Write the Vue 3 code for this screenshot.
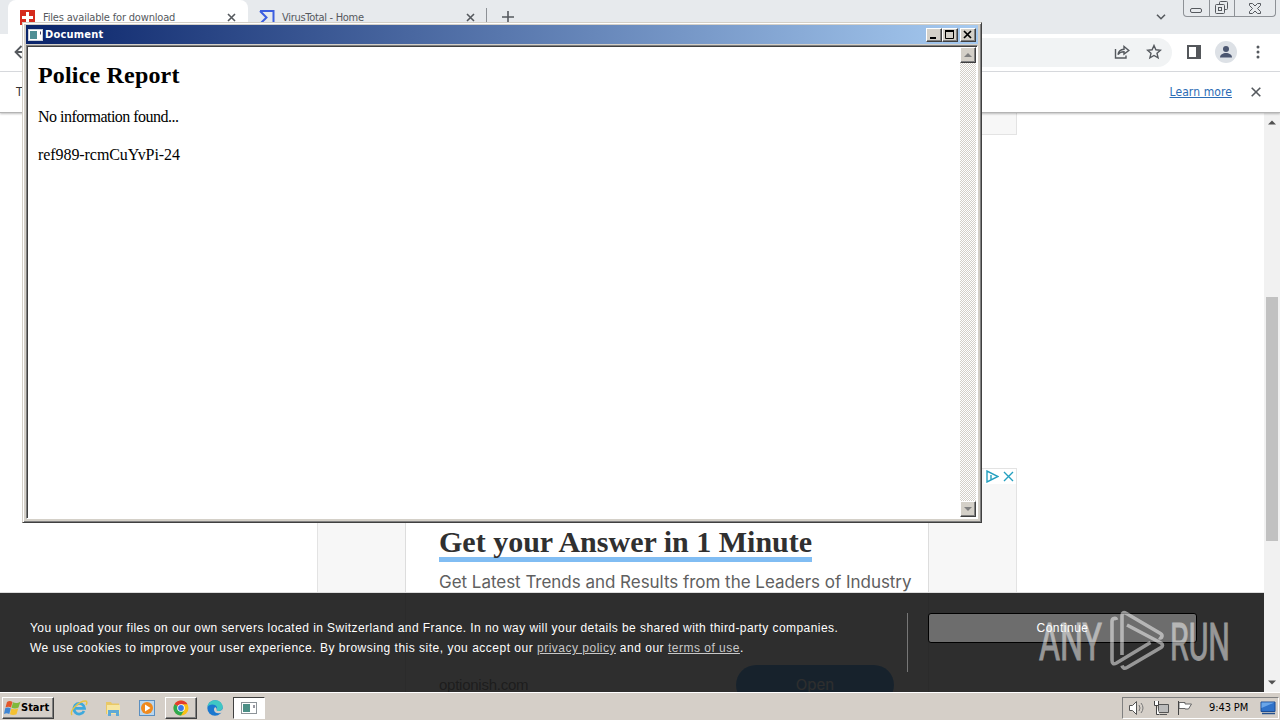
<template>
  <div class="desktop">
    <div class="browser">
      <div class="tabstrip">
        <div class="tab active">
          <svg class="favicon" width="15" height="15" viewBox="0 0 15 15">
            <rect width="15" height="15" fill="#d52b1e" />
            <path d="M6 2h3v4h4v3H9v4H6V9H2V6h4z" fill="#fff" />
          </svg>
          <span class="tab-title files">Files available for download</span>
          <svg class="tab-close" width="9" height="9" viewBox="0 0 9 9"><path d="M1 1l7 7M8 1L1 8" /></svg>
        </div>
        <div class="tab second">
          <svg class="favicon" width="16" height="15" viewBox="0 0 16 15">
            <path d="M1 1h13.5v13H1l6.5-6.500L1 1" fill="none" stroke="#3d5fe0" stroke-width="2" />
          </svg>
          <span class="tab-title vt">VirusTotal - Home</span>
          <svg class="tab-close" width="9" height="9" viewBox="0 0 9 9"><path d="M1 1l7 7M8 1L1 8" /></svg>
        </div>
        <span class="tab-sep"></span>
        <svg class="new-tab" width="12" height="12" viewBox="0 0 12 12"><path d="M6 0v12M0 6h12" /></svg>
        <svg class="tab-search" width="10" height="6" viewBox="0 0 10 6"><path d="M1 .7l4 4 4-4" /></svg>
        <div class="caption-buttons">
          <span class="cap cap-min">
            <svg width="13" height="5" viewBox="0 0 13 5"><rect x=".5" y=".5" width="11" height="4" rx="1.500" /></svg>
          </span>
          <span class="cap cap-max">
            <svg width="14" height="14" viewBox="0 0 14 14">
              <rect x="4.500" y=".5" width="8" height="8" rx="1" />
              <rect x=".5" y="3.500" width="9" height="9" rx="1" fill="#e7eaed" />
              <rect x="3.500" y="6.500" width="3" height="3" />
            </svg>
          </span>
          <span class="cap cap-close">
            <svg width="12" height="11" viewBox="0 0 12 11">
              <path d="M.5.5h3L6 3 8.500.5h3v2L8.500 5.500l3 3v2h-3L6 8l-2.500 2.500h-3v-2l3-3-3-3z" />
            </svg>
          </span>
        </div>
      </div>

      <div class="toolbar">
        <svg class="back" width="14" height="14" viewBox="0 0 14 14"><path d="M14 7H2M7.500 1L1.500 7l6 6" /></svg>
        <div class="omnibox">
          <svg width="16" height="14" viewBox="0 0 16 14">
            <path d="M1.500 4v9h10.500v-2.500" /><path d="M4 9.500C4.500 6 7 4.500 10 4.300V1.500L14.800 5.500 10 9V6.800C7.500 6.800 5.500 7.500 4 9.500z" />
          </svg>
          <svg width="16" height="16" viewBox="0 0 16 16">
            <path d="M8 1.500l1.900 4.300 4.600.4-3.500 3.100 1.100 4.600L8 11.500l-4.100 2.400L5 9.300 1.500 6.200l4.600-.4z" />
          </svg>
        </div>
        <svg class="sidepanel" width="14" height="14" viewBox="0 0 14 14">
          <rect x="1" y="1" width="12" height="12" fill="none" stroke="#54575b" stroke-width="2" />
          <rect x="9" y="1" width="4" height="12" fill="#54575b" />
        </svg>
        <span class="avatar">
          <svg width="14" height="14" viewBox="0 0 14 14">
            <circle cx="7" cy="4" r="3" /><path d="M1 12.500c0-6 12-6 12 0z" />
          </svg>
        </span>
        <svg class="kebab" width="4" height="14" viewBox="0 0 4 14">
          <circle cx="2" cy="2" r="1.500" /><circle cx="2" cy="7" r="1.500" /><circle cx="2" cy="12" r="1.500" />
        </svg>
      </div>

      <div class="infobar">
        <span class="info-text">T</span>
        <a class="learn">Learn more</a>
        <svg class="info-close" width="10" height="10" viewBox="0 0 10 10"><path d="M.7.7l8.600 8.600M9.300.7L.7 9.300" /></svg>
      </div>

      <div class="viewport">
        <div class="page">
          <div class="ad-top"></div>
          <div class="ad">
            <div class="ad-choices">
              <svg width="13" height="13" viewBox="0 0 13 13"><path d="M1 1v11l11-5.500zM5 5v4.500" /></svg>
              <svg width="11" height="11" viewBox="0 0 11 11"><path d="M1 1l9 9M10 1L1 10" /></svg>
            </div>
            <div class="ad-card">
              <div class="ad-title">Get your Answer in 1 Minute</div>
              <div class="ad-sub">Get Latest Trends and Results from the Leaders of Industry</div>
              <div class="ad-foot">
                <span class="ad-domain">optionish.com</span>
                <span class="ad-open">Open</span>
              </div>
            </div>
          </div>
          <div class="cookie">
            <div class="cookie-text">
              <p class="c1">You upload your files on our own servers located in Switzerland and France. In no way will your details be shared with third-party companies.</p>
              <p class="c2">We use cookies to improve your user experience. By browsing this site, you accept our <a>privacy policy</a> and our <a>terms of use</a>.</p>
            </div>
            <span class="cookie-rule"></span>
            <button class="continue">Continue</button>
          </div>
        </div>
        <div class="scrollbar">
          <svg width="8" height="5" viewBox="0 0 8 5"><path d="M0 4.500L4 .5l4 4z" /></svg>
          <span class="thumb"></span>
          <svg width="8" height="5" viewBox="0 0 8 5"><path d="M0 .5l4 4 4-4z" /></svg>
        </div>
      </div>
    </div>

    <div class="taskbar">
      <div class="start">
        <svg width="17" height="16" viewBox="0 0 17 16">
          <path d="M3 2c2-1.500 4-1 5.500 0L7 7.500C5.500 6.500 3.500 6.300 1.500 7.500z" fill="#e2572b" />
          <path d="M9 2.300c2 1.200 5 1.200 7.500-.8L14.500 7.500c-2 1.300-5 1.200-7 .2z" fill="#7fb93c" />
          <path d="M1.200 8.200c2-1.200 4-.8 5.600.2L5.300 14C3.500 13 2 12.800 0 14z" fill="#3f86d4" />
          <path d="M7.300 8.500c2 1 5 1 7-.3L12.500 14.200c-2 1-4.500 1-6.500 0z" fill="#f5c131" />
        </svg>
        <span>Start</span>
      </div>
      <div class="quick">
        <span class="task">
          <svg width="18" height="18" viewBox="0 0 18 18">
            <path d="M14 12A5.300 5.300 0 1 1 14.500 9.300H5" fill="none" stroke="#3fa9dc" stroke-width="2.800" />
            <path d="M2 16C-1 12 9 2 15.500 2c2 0 1.500 2.500.5 4" fill="none" stroke="#e8c440" stroke-width="1.400" />
          </svg>
        </span>
        <span class="task">
          <svg width="18" height="18" viewBox="0 0 18 18">
            <path d="M2 3h5l1 1.500h7V15H2z" fill="#e9c866" />
            <path d="M3 6h13v9H3z" fill="#f7e6a0" />
            <path d="M4 17v-6h11v6h-3v-3H7v3z" fill="#5fa9d6" />
          </svg>
        </span>
        <span class="task">
          <svg width="16" height="16" viewBox="0 0 16 16">
            <rect x=".5" y=".5" width="15" height="15" fill="#b9d6ee" stroke="#5b8fc0" />
            <circle cx="8" cy="8" r="6" fill="#f08a1d" /><path d="M6 4.500v7L11.500 8z" fill="#fff" />
          </svg>
        </span>
        <span class="task raised">
          <svg width="16" height="16" viewBox="0 0 16 16">
            <circle cx="8" cy="8" r="7.500" fill="#fbc116" />
            <path d="M8 8L1.500 4.250A7.500 7.500 0 0 1 14.500 4.250H8z" fill="#e33b2e" />
            <path d="M8 8L1.500 4.250A7.500 7.500 0 0 0 8 15.500L11.250 9.900z" fill="#2da94f" />
            <circle cx="8" cy="8" r="3.800" fill="#fff" /><circle cx="8" cy="8" r="2.900" fill="#3b78e7" />
          </svg>
        </span>
        <span class="task">
          <svg width="16" height="16" viewBox="0 0 16 16">
            <circle cx="8" cy="8" r="7.700" fill="#1b78cf" />
            <path d="M.5 7C1 2.500 4.500.3 8 .3c5 0 7.700 3.500 7.700 6.700 0 2.500-2 4-4 4-1.500 0-2.700-.7-2-1.500C11 7.500 9 4.500 5.500 4.500 3 4.500 1.200 5.500.5 7z" fill="#3fc7c4" />
            <path d="M9.700 9.500c-.7.800.5 1.500 2 1.500 1.800 0 3.300-.8 3.900-2.300l.4 3-2.500 1.300c-4 1-6.500-1-6.500-3.500 0-1 .5-2 1.200-2.300 1 .3 1.700 1.500 1.500 2.300z" fill="#d5cfc8" />
          </svg>
        </span>
        <span class="task pressed">
          <svg width="16" height="12" viewBox="0 0 16 12">
            <rect x=".5" y=".5" width="15" height="11" fill="#fff" stroke="#8d9499" />
            <rect x="2" y="2" width="7" height="8" fill="#4c8f86" /><path d="M13 3v3" stroke="#334" />
          </svg>
        </span>
      </div>
      <div class="tray">
        <svg width="18" height="16" viewBox="0 0 18 16">
          <path d="M1.500 5.500h3l4-4v13l-4-4h-3z" fill="#fff" stroke="#555" />
          <path d="M11 5q2 3 0 6M13 3q4 5 0 10" fill="none" stroke="#777" />
        </svg>
        <svg width="17" height="16" viewBox="0 0 17 16">
          <path d="M5.500 4.500h10v8h-10zM7 14.500h7" fill="#bbb" stroke="#555" />
          <path d="M1.500 1v4.500h4V1M3.500 5.500v9h3" fill="#fff" stroke="#444" />
        </svg>
        <svg width="16" height="16" viewBox="0 0 16 16">
          <path d="M2 2.500h6v1.500h6.500l-3 5H8V8.500H2z" fill="#fff" stroke="#666" /><path d="M1.500 1v14" stroke="#444" />
        </svg>
        <span class="clock">9:43 PM</span>
        <svg class="show-desktop" width="16" height="14" viewBox="0 0 16 14">
          <path d="M1 1h14v9.500H1z" fill="#2f72c9" stroke="#1c4d94" />
          <path d="M1.500 1.500h13L1.500 7z" fill="#69a5e8" /><path d="M2 12.500h13" stroke="#24508c" stroke-width="1.500" />
        </svg>
      </div>
    </div>

    <div class="window">
      <div class="titlebar">
        <svg width="16" height="14" viewBox="0 0 16 14">
          <rect x=".5" y="1.500" width="14" height="11" fill="#fff" stroke="#c9d0d8" />
          <rect x="2" y="3" width="7" height="8" fill="#4f8f95" /><path d="M12.500 3.500v3" stroke="#446" />
        </svg>
        <span class="win-title">Document</span>
        <span class="wbtn"><svg width="12" height="10" viewBox="0 0 12 10"><path d="M2 8h6" stroke="#000" stroke-width="2" /></svg></span>
        <span class="wbtn"><svg width="12" height="10" viewBox="0 0 12 10"><path d="M1.500.5v8h8v-8" fill="none" stroke="#000" /><path d="M1 1h9" stroke="#000" stroke-width="2" /></svg></span>
        <span class="wbtn last"><svg width="12" height="10" viewBox="0 0 12 10"><path d="M2 1l7 7M9 1L2 8" stroke="#000" stroke-width="1.700" /></svg></span>
      </div>
      <div class="win-body">
        <div class="doc">
          <h2>Police Report</h2>
          <p class="d1">No information found...</p>
          <p class="d2">ref989-rcmCuYvPi-24</p>
        </div>
        <div class="win-scroll">
          <span class="sbtn"><svg width="8" height="4" viewBox="0 0 8 4"><path d="M0 4l4-4 4 4z" /></svg></span>
          <span class="sbtn"><svg width="8" height="4" viewBox="0 0 8 4"><path d="M0 0l4 4 4-4z" /></svg></span>
        </div>
      </div>
    </div>

    <svg class="watermark" width="200" height="70" viewBox="1035 605 200 70">
      <text x="1039" y="660" textLength="63" lengthAdjust="spacingAndGlyphs">ANY</text>
      <text x="1170" y="660" textLength="60" lengthAdjust="spacingAndGlyphs">RUN</text>
      <path d="M1116.500 620q-.5-2-2.500-1.500-2 .5-2 3V660q0 5.500 4.500 3l34-20.500" />
      <path d="M1122 655V616q0-5 4.500-2.500l34 20q2.500 1.500 1 4-1 1-2.500 0" />
      <path d="M1127 625l34 18q3 2 0 4.500l-34 20q-4 2-5-2" />
    </svg>
  </div>
</template>

<script setup>
</script>

<style>
html,
body {
  margin: 0;
  overflow: hidden;
}
</style>

<style scoped>
.desktop {
  position: relative;
  display: flex;
  flex-direction: column;
  width: 1280px;
  height: 720px;
  overflow: hidden;
  background: #fff;
  font-family: "Liberation Sans", Arial, sans-serif;
}
.desktop svg { flex: none; display: block; }
.browser { height: 692px; display: flex; flex-direction: column; }

.tabstrip {
  height: 34px;
  flex: none;
  display: flex;
  align-items: flex-start;
  background: #e7eaed;
  padding-left: 8px;
}
.tab {
  display: flex;
  align-items: center;
  width: 240px;
  height: 34px;
  box-sizing: border-box;
  padding: 0 12px;
}
.tab.active { background: #fff; border-radius: 8px 8px 0 0; }
.tab.second { padding: 0 13px 0 11px; }
.tab-title {
  flex: 1;
  margin-left: 8px;
  white-space: nowrap;
  font: 11px "DejaVu Sans Condensed", "DejaVu Sans", sans-serif;
  color: #55595e;
}
.files { letter-spacing: -0.18px; }
.vt { margin-left: 7px; letter-spacing: -0.3px; }
.tab-close path, .new-tab path, .tab-search path, .info-close path {
  fill: none;
  stroke: #55595e;
  stroke-width: 1.6;
}
.tab-sep { width: 1px; height: 14px; margin: 8px 15px 0 -2px; background: #8d9196; }
.new-tab { margin-top: 11px; }
.tab-search { margin: 14px 17px 0 auto; }
.caption-buttons {
  display: flex;
  width: 93px;
  height: 17px;
  margin-right: 4px;
  box-sizing: border-box;
  border: 1px solid #8d9196;
  border-top: 0;
  border-radius: 0 0 4px 4px;
}
.cap { display: flex; align-items: center; justify-content: center; }
.cap svg { fill: none; stroke: #55595e; }
.cap-min { width: 25px; padding-top: 4px; }
.cap-max { width: 24px; border: solid #8d9196; border-width: 0 1px; }
.cap-close { flex: 1; }

.toolbar {
  height: 37px;
  flex: none;
  display: flex;
  align-items: center;
  border-bottom: 1px solid #dadce0;
  padding: 0 20px 0 14px;
}
.back { fill: none; stroke: #55595e; stroke-width: 1.8; }
.omnibox {
  flex: 1;
  height: 29px;
  margin-left: 81px;
  padding-right: 10px;
  display: flex;
  align-items: center;
  justify-content: flex-end;
  gap: 16px;
  border-radius: 15px;
  background: #f1f3f4;
}
.omnibox svg { fill: none; stroke: #55595e; stroke-width: 1.4; }
.sidepanel { margin-left: 15px; }
.toolbar > svg, .omnibox svg, .avatar { margin-bottom: 1px; }
.avatar {
  width: 22px;
  height: 22px;
  margin-left: 14px;
  margin-right: 19px;
  display: flex;
  align-items: center;
  justify-content: center;
  border-radius: 50%;
  background: #dde1e6;
  fill: #4b5670;
}
.kebab { fill: #55595e; }

.infobar {
  position: relative;
  height: 41px;
  box-sizing: border-box;
  flex: none;
  display: flex;
  align-items: center;
  padding: 0 19px 0 16px;
  background: #fff;
  border-bottom: 1px solid #b4b4b4;
  box-shadow: 0 1px 2px rgba(0, 0, 0, 0.25);
  font: 12px "DejaVu Sans Condensed", sans-serif;
  color: #333;
}
.learn { margin-left: auto; letter-spacing: 0.1px; color: #2b6cb5; text-decoration: underline; }
.info-close { margin-left: 19px; }

.viewport { flex: 1; display: flex; min-height: 0; }
.page {
  flex: 1;
  display: flex;
  flex-direction: column;
  align-items: flex-start;
  padding-left: 317px;
  overflow: hidden;
}
.ad-top, .ad { width: 700px; box-sizing: border-box; border: 1px solid #e3e3e3; background: #f7f7f7; flex: none; }
.ad-top { height: 22px; border-top: 0; }
.ad { height: 124px; margin-top: 333px; padding: 0 87px; border-bottom: 0; position: relative; }
.ad-choices {
  position: absolute;
  top: 0;
  right: 0;
  display: flex;
  align-items: center;
  gap: 4px;
  height: 15px;
  padding: 0 2px;
  background: #fff;
  fill: none;
  stroke: #24a0c0;
  stroke-width: 1.4;
}
.ad-card {
  height: 223px;
  box-sizing: border-box;
  padding: 54px 0 0 33px;
  background: #fff;
  border: solid #ddd;
  border-width: 0 1px;
}
.ad-title {
  width: 373px;
  height: 39px;
  line-height: 38px;
  white-space: nowrap;
  border-bottom: 5px solid #81bdf3;
  box-sizing: border-box;
  font-family: "Liberation Serif", serif;
  font-weight: bold;
  font-size: 30px;
  color: #303030;
}
.ad-sub {
  margin-top: 10px;
  line-height: 21px;
  white-space: nowrap;
  font-family: Inter, sans-serif;
  font-size: 17px;
  letter-spacing: -0.03px;
  color: #606060;
}
.ad-foot {
  display: flex;
  justify-content: space-between;
  margin-top: 72px;
  padding-right: 34px;
}
.ad-domain { line-height: 40px; color: #555; font-size: 15px; letter-spacing: -0.25px; }
.ad-open {
  width: 158px;
  height: 40px;
  border-radius: 20px;
  background: #1987eb;
  color: #fff;
  text-align: center;
  font: 15px/40px Inter, sans-serif;
}
.cookie {
  position: relative;
  display: flex;
  align-items: flex-start;
  width: 1264px;
  height: 100px;
  margin-left: -317px;
  padding: 20px 0 0 30px;
  box-sizing: border-box;
  border-top: 1px solid #ddd;
  background: rgba(23, 23, 23, 0.9);
  background-clip: padding-box;
  color: #fff;
}
.cookie-text { width: 877px; padding-top: 5px; white-space: nowrap; }
.cookie-text p { margin: 0; font-size: 12px; line-height: 20px; letter-spacing: 0.5px; }
.cookie-text .c1 { letter-spacing: 0.437px; }
.cookie-text a { color: #c8c8c8; text-decoration: underline; }
.cookie-rule { width: 1px; height: 59px; background: #777; }
.continue {
  width: 269px;
  height: 30px;
  margin-left: 20px;
  padding: 0;
  border: 1px solid #000;
  border-radius: 3px;
  background: #6d6d6d;
  color: #fff;
  font: 12px "Liberation Sans", sans-serif;
  letter-spacing: 0.5px;
}
.scrollbar {
  width: 16px;
  display: flex;
  flex-direction: column;
  align-items: center;
  box-sizing: border-box;
  padding: 7px 0;
  background: #f1f1f1;
  fill: #505050;
}
.thumb { width: 12px; height: 244px; margin: 172px 0 auto; background: #c1c1c1; }

.taskbar {
  height: 28px;
  box-sizing: border-box;
  display: flex;
  align-items: center;
  border-top: 1px solid #fff;
  background: #d5cfc8;
  padding: 2px 1px 0 2px;
}
.start {
  width: 52px;
  height: 22px;
  box-sizing: border-box;
  display: flex;
  align-items: center;
  padding-left: 1px;
  border: 1px solid;
  border-color: #fff #404040 #404040 #fff;
  box-shadow: inset -1px -1px #808080;
  font: bold 11px "DejaVu Sans Condensed", sans-serif;
  color: #000;
}
.quick { display: flex; gap: 2px; margin-left: 9px; }
.task {
  width: 32px;
  height: 22px;
  box-sizing: border-box;
  display: flex;
  align-items: center;
  justify-content: center;
}
.raised { border: 1px solid; border-color: #fff #404040 #404040 #fff; box-shadow: inset -1px -1px #808080; }
.pressed { border: 1px solid; border-color: #404040 #fff #fff #404040; background: #fff; }
.tray {
  width: 157px;
  height: 22px;
  box-sizing: border-box;
  margin-left: auto;
  display: flex;
  align-items: center;
  gap: 7px;
  padding-left: 5px;
  border: 1px solid;
  border-color: #808080 #fff #fff #808080;
}
.clock {
  margin-left: 9px;
  width: 44px;
  white-space: nowrap;
  letter-spacing: -0.1px;
  font: 11px "DejaVu Sans Condensed", sans-serif;
  color: #000;
}

/* Floating document window */
.window {
  position: absolute;
  left: 22px;
  top: 22px;
  width: 960px;
  height: 501px;
  box-sizing: border-box;
  display: flex;
  flex-direction: column;
  padding: 2px 3px 3px 2px;
  border: 1px solid;
  border-color: #d4d0c8 #404040 #404040 #d4d0c8;
  box-shadow: inset 1px 1px #fff, inset -1px -1px #808080;
  background: #d4d0c8;
}
.titlebar {
  height: 19px;
  flex: none;
  display: flex;
  align-items: center;
  padding: 0 2px;
  margin-left: 1px;
  background: linear-gradient(90deg, #0a246a, #a6caf0);
}
.win-title {
  flex: 1;
  margin-left: 1px;
  font: bold 11px "DejaVu Sans Condensed", sans-serif;
  letter-spacing: 0.2px;
  color: #fff;
}
.wbtn {
  width: 16px;
  height: 14px;
  box-sizing: border-box;
  display: flex;
  align-items: center;
  justify-content: center;
  border: 1px solid;
  border-color: #fff #404040 #404040 #fff;
  box-shadow: inset -1px -1px #808080;
  background: #d4d0c8;
}
.wbtn.last { margin-left: 2px; }
.win-body {
  flex: 1;
  display: flex;
  margin: 1px 0 0 1px;
  border: 1px solid;
  border-color: #808080 #fff #fff #808080;
  box-shadow: inset 1px 1px #404040;
  padding: 1px;
  background: #fff;
}
.doc { flex: 1; padding: 14px 0 0 10px; font-family: "Liberation Serif", serif; color: #000; }
.doc h2 { margin: 0; font-size: 24px; line-height: 28px; letter-spacing: 0.18px; white-space: nowrap; }
.doc p { margin: 19px 0 0; font-size: 16px; line-height: 19px; white-space: nowrap; }
.doc .d1 { margin-top: 18px; letter-spacing: -0.52px; }
.doc .d2 { letter-spacing: -0.07px; }
.win-scroll {
  width: 16px;
  display: flex;
  flex-direction: column;
  justify-content: space-between;
  background: repeating-conic-gradient(#fff 0 25%, #d4d0c8 0 50%) 0 0 / 2px 2px;
}
.sbtn {
  height: 16px;
  box-sizing: border-box;
  display: flex;
  align-items: center;
  justify-content: center;
  border: 1px solid;
  border-color: #fff #404040 #404040 #fff;
  box-shadow: inset -1px -1px #808080;
  background: #d4d0c8;
  fill: #808080;
}

.watermark { position: absolute; left: 1035px; top: 605px; opacity: 0.5; }
.watermark text { font: 52px Roboto, sans-serif; fill: #fff; stroke: #fff; stroke-width: 1px; }
.watermark path { fill: none; stroke: #fff; stroke-width: 3.6; }
</style>
